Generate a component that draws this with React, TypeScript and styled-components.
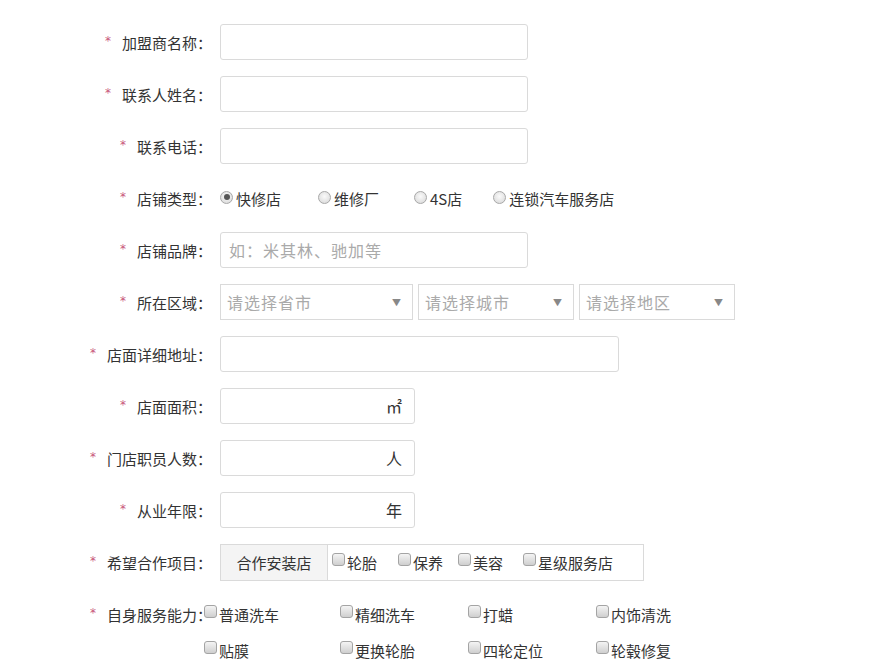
import React from "react";
import styled, { createGlobalStyle, css } from "styled-components";

const GlobalStyle = createGlobalStyle`
  body {
    margin: 0;
    background: #fff;
    font-family: "Noto Sans CJK SC", "Microsoft YaHei", sans-serif;
    color: #333;
  }
`;

const Form = styled.div`
  padding: 24px 0 0 80px;
`;

const Row = styled.div<{ $auto?: boolean }>`
  display: flex;
  align-items: ${p => (p.$auto ? "flex-start" : "center")};
  height: ${p => (p.$auto ? "auto" : "36px")};
  margin-bottom: 16px;
`;

const Label = styled.div`
  width: 132px;
  height: 36px;
  flex-shrink: 0;
  display: flex;
  align-items: center;
  justify-content: flex-end;
  font-size: 15px;
  white-space: nowrap;
`;

const Star = styled.span`
  color: #c8567a;
  font-family: "DejaVu Sans", sans-serif;
  font-size: 12px;
  margin-right: 11px;
  position: relative;
  top: -1px;
`;

const Field = styled.div<{ $tight?: boolean }>`
  margin-left: ${p => (p.$tight ? "-8px" : "8px")};
  display: flex;
  align-items: center;
  position: relative;
`;

const boxBase = css`
  box-sizing: border-box;
  height: 36px;
  border: 1px solid #dadada;
  border-radius: 3px;
  background: #fff;
`;

const TextBox = styled.div<{ $w: number }>`
  ${boxBase};
  width: ${p => p.$w}px;
  display: flex;
  align-items: center;
  padding: 0 8px;
  font-size: 16px;
  letter-spacing: 1px;
  color: #aaa;
`;

const UnitBox = styled.div`
  ${boxBase};
  width: 195px;
  display: flex;
  align-items: center;
  justify-content: flex-end;
  padding-right: 12px;
  font-size: 16px;
  color: #333;
`;

const SelectBox = styled.div<{ $w: number }>`
  ${boxBase};
  border-radius: 0;
  width: ${p => p.$w}px;
  margin-right: 5px;
  display: flex;
  align-items: center;
  justify-content: space-between;
  padding: 0 10px 0 6px;
  font-size: 16px;
  letter-spacing: 1px;
  color: #aaa;
`;

const Arrow = styled.span`
  font-size: 9px;
  color: #888;
`;

const Option = styled.label<{ $gap: number }>`
  display: inline-flex;
  align-items: center;
  font-size: 15px;
  margin-right: ${p => p.$gap}px;
  white-space: nowrap;
`;

const Radio = styled.span<{ $on?: boolean }>`
  box-sizing: border-box;
  width: 13px;
  height: 13px;
  border-radius: 50%;
  border: 1px solid #a8a8a8;
  background: radial-gradient(circle at 50% 40%, #fafafa 0%, #d6d6d6 100%);
  margin-right: 3px;
  position: relative;
  top: -1px;
  ${p =>
    p.$on &&
    css`
      &::after {
        content: "";
        position: absolute;
        left: 2.5px;
        top: 2.5px;
        width: 6px;
        height: 6px;
        border-radius: 50%;
        background: #555;
      }
    `}
`;

const Check = styled.span`
  box-sizing: border-box;
  width: 13px;
  height: 13px;
  border-radius: 3px;
  border: 1px solid #a4a4a4;
  background: linear-gradient(#f4f4f4, #cfcfcf);
  margin-right: 2px;
  position: relative;
  top: -3px;
`;

const CoopBox = styled.div`
  box-sizing: border-box;
  width: 424px;
  height: 37px;
  border: 1px solid #dadada;
  display: flex;
  align-items: center;
`;

const CoopHead = styled.div`
  width: 106px;
  height: 100%;
  background: #f4f4f4;
  border-right: 1px solid #dadada;
  display: flex;
  align-items: center;
  justify-content: center;
  font-size: 15px;
  margin-right: 4px;
`;

const ServiceGrid = styled.div`
  display: grid;
  grid-template-columns: 136px 128px 128px auto;
  grid-auto-rows: 36px;
  align-items: center;
`;

const CheckItem = styled.label`
  display: inline-flex;
  align-items: center;
  font-size: 15px;
  white-space: nowrap;
`;

const FormLabel = ({ text }: { text: string }) => (
  <Label>
    <Star>*</Star>
    {text}
  </Label>
);

const coop = [
  { t: "轮胎", g: 21 },
  { t: "保养", g: 15 },
  { t: "美容", g: 20 },
  { t: "星级服务店", g: 0 },
];

const services = ["普通洗车", "精细洗车", "打蜡", "内饰清洗", "贴膜", "更换轮胎", "四轮定位", "轮毂修复"];

const App = () => (
  <>
    <GlobalStyle />
    <Form>
      <Row>
        <FormLabel text="加盟商名称：" />
        <Field><TextBox $w={308} /></Field>
      </Row>
      <Row>
        <FormLabel text="联系人姓名：" />
        <Field><TextBox $w={308} /></Field>
      </Row>
      <Row>
        <FormLabel text="联系电话：" />
        <Field><TextBox $w={308} /></Field>
      </Row>
      <Row>
        <FormLabel text="店铺类型：" />
        <Field>
          <Option $gap={37}><Radio $on />快修店</Option>
          <Option $gap={35}><Radio />维修厂</Option>
          <Option $gap={31}><Radio />4S店</Option>
          <Option $gap={0}><Radio />连锁汽车服务店</Option>
        </Field>
      </Row>
      <Row>
        <FormLabel text="店铺品牌：" />
        <Field><TextBox $w={308}>如：米其林、驰加等</TextBox></Field>
      </Row>
      <Row>
        <FormLabel text="所在区域：" />
        <Field>
          <SelectBox $w={193}>请选择省市<Arrow>▼</Arrow></SelectBox>
          <SelectBox $w={156}>请选择城市<Arrow>▼</Arrow></SelectBox>
          <SelectBox $w={156}>请选择地区<Arrow>▼</Arrow></SelectBox>
        </Field>
      </Row>
      <Row>
        <FormLabel text="店面详细地址：" />
        <Field><TextBox $w={399} /></Field>
      </Row>
      <Row>
        <FormLabel text="店面面积：" />
        <Field><UnitBox>㎡</UnitBox></Field>
      </Row>
      <Row>
        <FormLabel text="门店职员人数：" />
        <Field><UnitBox>人</UnitBox></Field>
      </Row>
      <Row>
        <FormLabel text="从业年限：" />
        <Field><UnitBox>年</UnitBox></Field>
      </Row>
      <Row>
        <FormLabel text="希望合作项目：" />
        <Field>
          <CoopBox>
            <CoopHead>合作安装店</CoopHead>
            {coop.map(c => (
              <Option key={c.t} $gap={c.g}><Check />{c.t}</Option>
            ))}
          </CoopBox>
        </Field>
      </Row>
      <Row $auto>
        <FormLabel text="自身服务能力：" />
        <Field $tight>
          <ServiceGrid>
            {services.map(s => (
              <CheckItem key={s}><Check />{s}</CheckItem>
            ))}
          </ServiceGrid>
        </Field>
      </Row>
    </Form>
  </>
);

export default App;
